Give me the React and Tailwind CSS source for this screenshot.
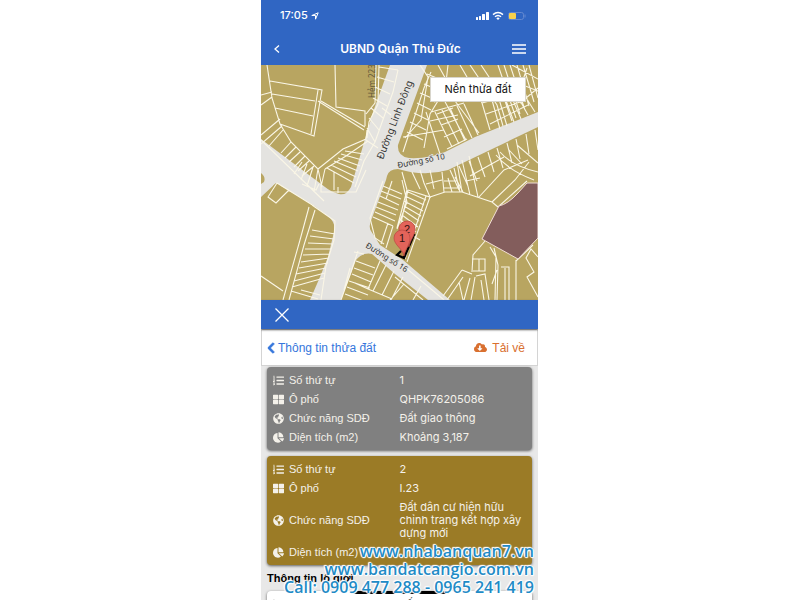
import {
  FaChartPie,
  FaChevronLeft,
  FaCloudDownloadAlt,
  FaGlobeAmericas,
  FaListOl,
  FaThLarge,
} from 'react-icons/fa';

const parcels = [
  {
    id: 1,
    color: 'bg-[#808080]',
    block: 'QHPK76205086',
    usage: 'Đất giao thông',
    area: 'Khoảng 3,187',
  },
  {
    id: 2,
    color: 'bg-[#9b7b26]',
    block: 'I.23',
    usage: 'Đất dân cư hiện hữu chỉnh trang kết hợp xây dựng mới',
    area: '',
  },
];

// Evenly spaced lot boundaries between the edges a-b and c-d
function rungs([ax, ay], [bx, by], [cx, cy], [dx, dy], n) {
  let d = '';
  for (let i = 0; i <= n; i++) {
    const t = i / n;
    d += `M${Math.round(ax + (bx - ax) * t)} ${Math.round(ay + (by - ay) * t)}`;
    d += `L${Math.round(cx + (dx - cx) * t)} ${Math.round(cy + (dy - cy) * t)}`;
  }
  return d;
}

const roads = [
  'M390 65L373 112L365 139L351 187Q346 196 339 194Q331 192 325 187L261 139V173Q266 177 264 182L261 184V197L276 183L313 205L329 217Q336 223 334 232L328 257L320 277L310 300H341L356 260Q363 252 372 254L395 274L428 300H450L403 260L380 245L371 231Q368 226 372 218L386 180L387 176Q389 169 398 169Q424 177 448 170L538 127V112L475 137L445 152Q428 159 409 158Q397 156 398 145L427 65Z',
];

const boundaries = [
  'M267 65L272 98L280 124L291 142L318 169L322 187',
  'M270 81L322 90L314 136L280 124M272 94L315 101M275 108L313 116M318 90L311 134',
  'M318 101L364 130M321 101L365 127',
  'M335 65L336 107L365 111V126M376 65L375 103L366 114M379 65L378 104L369 122L367 138',
  'M367 130L366 139L343 149L318 169M325 169L346 156L368 141M325 169L321 187M334 172V190',
  'M261 95L272 92M261 105L272 97M261 135L280 119M261 144L282 126M269 146L283 130M261 140L324 201',
  rungs([291, 142], [314, 166], [281, 153], [302, 176], 5),
  rungs([302, 162], [318, 169], [294, 174], [314, 192], 3),
  rungs([345, 151], [327, 168], [364, 154], [354, 183], 5),
  rungs([379, 67], [367, 128], [398, 70], [375, 142], 6),
  'M398 70L393 92L385 114L375 142L364 161L355 187M382 108L391 115M366 140L378 148',
  'M277 183L268 197L276 203L289 190M277 183L314 206M309 207L300 240L283 300M315 210L304 245L289 300M312 205L335 221L334 240L326 266L321 300',
  'M261 276L283 291M302 184L316 190L319 184M321 182V192H356L366 170M338 187V193',
  rungs([312, 230], [292, 287], [335, 234], [324, 278], 9),
  'M291 291L318 299M301 290L320 295',
  'M358 251L351 272L341 300M350 268L344 290M354 252L364 254M383 181L370 218L375 238L384 244',
  rungs([356, 261], [345, 294], [375, 268], [366, 302], 5),
  'M380 261L368 289L392 299M386 265L373 291M394 271L382 295M403 277L391 300M368 289L355 283',
  rungs([383, 186], [373, 217], [402, 194], [393, 226], 6),
  'M402 180L407 202L397 229M392 181L386 199M388 223L381 244M393 226L386 248M407 190L397 228',
  'M430 197L407 262M426 196L405 259M408 190L430 197L424 183L420 170M408 190L400 228L420 240',
  rungs([406, 191], [401, 220], [426, 200], [416, 232], 6),
  'M430 197L445 192L462 192L477 197L492 202L498 207M444 192L442 172M452 192L448 178M460 192L454 168',
  'M462 192L457 162M470 195L462 160M478 197L469 156M470 176L504 157M492 202L515 180L529 162M498 207L527 181M479 197L504 170L528 160',
  'M444 181H457M444 188H460M402 172L407 190M412 172L420 189M430 170L434 189M426 184L442 180M455 177L463 192M466 181L480 178',
  rungs([450, 170], [535, 130], [459, 190], [538, 150], 9),
  'M496 155Q508 170 534 180M500 152Q512 166 538 172M509 150L522 164M517 145L538 163',
  'M403 152L424 88L431 72M420 65L428 77L421 120L405 138M403 137L444 130M424 148L430 114L441 96M440 154L426 112',
  rungs([427, 74], [407, 132], [439, 79], [423, 140], 6),
  rungs([431, 90], [447, 149], [444, 88], [467, 139], 5),
  rungs([435, 112], [464, 104], [452, 147], [478, 135], 4),
  'M448 65L444 100L466 140M455 101L479 133M460 65L482 103L490 130M470 65L497 105L503 126M481 65L505 101L512 121M438 65L458 101',
  'M431 112L464 103M430 121L458 115M448 100L488 96M482 103L512 95M486 114L520 102M490 124L528 105',
  rungs([492, 100], [525, 96], [500, 129], [535, 112], 5),
  rungs([498, 65], [529, 65], [516, 118], [538, 98], 5),
  'M512 65L538 79M505 78L538 91M527 68L518 95M538 88L520 103',
  'M485 241L473 255L472 272M472 259H485V271H473M479 259V271M462 270L443 296M462 270L472 274M463 277L447 300M459 282L463 300M470 278L464 300M475 277L471 300M476 276L485 274L489 300M481 280L484 300M490 247L496 257L495 300M494 248L498 265L497 300M501 267H509V300M505 268V300M516 260V300M492 284L497 270',
  'M538 257L531 249L526 258L534 272L527 277L538 297M516 261L533 245',
  'M395 277L423 300M400 263L444 300M404 284L390 300M421 286L413 300',
];

function ParcelMap() {
  return (
    <svg
      viewBox="261 65 277 235"
      preserveAspectRatio="xMidYMid slice"
      className="block h-[235px] w-full"
      role="img"
      aria-label="Bản đồ thửa đất"
    >
      <rect x="0" y="0" width="800" height="400" fill="#b8a561" />
      {roads.map((d) => (
        <path key={d} d={d} fill="#e4e3e0" />
      ))}
      <ellipse cx="277" cy="187" rx="4" ry="3" fill="#b8a561" />
      <path d={boundaries.join('')} fill="none" stroke="#faf6e6" strokeWidth="1.1" />
      <path
        d="M527 183L518 193Q508 204 499 206L482 239L518 259L538 238V183Z"
        fill="#835d5c"
        stroke="#f0dcd4"
        strokeWidth="1"
      />
      <g fill="#333" stroke="#e4e3e0" strokeWidth="1.5" paintOrder="stroke" className="font-['Noto_Sans',sans-serif]">
        <text fontSize="10" transform="translate(383 160) rotate(-69)">Đường Linh Đông</text>
        <text fontSize="8" transform="translate(398 168) rotate(-11)">Đường số 10</text>
        <text fontSize="8" transform="translate(365 247) rotate(32)">Đường số 16</text>
      </g>
      <text fontSize="8" fill="#65593a" transform="translate(375 98) rotate(-90)" className="font-['Noto_Sans',sans-serif]">
        Hẻm 223
      </text>
      <path d="M401 251L397 255L404 258L414 235L411 234" fill="#b88a4b" stroke="#000" strokeWidth="2.2" />
      <Pin x={407} y={229} label="2" />
      <Pin x={402} y={238} label="1" />
    </svg>
  );
}

function Pin({ x, y, label }) {
  return (
    <g transform={`translate(${x} ${y})`}>
      <path d="M2 18C1 11-8 7-8 0A8 8 0 0 1 8 0C8 7 3 11 2 18Z" fill="#e3645a" stroke="#b94740" strokeWidth="0.7" />
      <text y="4" fontSize="11" textAnchor="middle" fill="#321412" className="font-['Liberation_Sans',sans-serif]">
        {label}
      </text>
    </g>
  );
}

function StatusIcons() {
  return (
    <svg viewBox="0 0 50 10" className="h-[10px] w-[50px]" fill="#fff" aria-hidden="true">
      <rect x="0" y="6" width="2" height="3" rx="0.5" />
      <rect x="3" y="5" width="2" height="4" rx="0.5" />
      <rect x="6" y="3" width="3" height="6" rx="0.5" />
      <rect x="10" y="1" width="3" height="8" rx="0.5" />
      <g fill="none" stroke="#fff" strokeWidth="1.5">
        <path d="M17 3.6Q22 -0.6 27 3.6" />
        <path d="M19 5.8Q22 3.2 25 5.8" />
      </g>
      <path d="M20.3 7.2Q22 6 23.7 7.2L22 9Z" />
      <rect x="32.5" y="1.5" width="15" height="7" rx="2" fill="none" stroke="#6288d0" />
      <path d="M49 3.5V6.5" stroke="#6288d0" />
      <rect x="33" y="2" width="7" height="6" rx="1" fill="#f7d14c" />
    </svg>
  );
}

function Row({ icon: Icon, label, value }) {
  return (
    <div className="flex items-center py-[3px] leading-[13px]">
      <dt className="flex w-1/2 shrink-0 items-center gap-[5px] whitespace-nowrap font-['Liberation_Sans',sans-serif]">
        <Icon className="size-[11px] shrink-0" />
        {label}
      </dt>
      <dd className="min-h-[13px]">{value}</dd>
    </div>
  );
}

function ParcelCard({ parcel }) {
  return (
    <dl className={`rounded-sm px-[6px] pt-1 pb-[3px] text-[11px] text-[#f4f1ea] shadow-[0_1px_3px_rgba(0,0,0,0.6)] ${parcel.color}`}>
      <Row icon={FaListOl} label="Số thứ tự" value={parcel.id} />
      <Row icon={FaThLarge} label="Ô phố" value={parcel.block} />
      <Row icon={FaGlobeAmericas} label="Chức năng SDĐ" value={parcel.usage} />
      <Row icon={FaChartPie} label="Diện tích (m2)" value={parcel.area} />
    </dl>
  );
}

export default function App() {
  return (
    <div className="flex h-screen justify-center overflow-hidden bg-white pr-px font-['Inter',sans-serif]">
      <main className="relative w-full max-w-[277px] overflow-hidden bg-[#e8e8e8]">
        <header className="bg-[#3066c3] text-white">
          <div className="flex h-[31px] items-center justify-between pr-3 pl-[19px]">
            <div className="flex items-center gap-[3px] text-[11px] font-medium">
              17:05
              <svg viewBox="0 0 8 8" className="size-2" fill="none" stroke="#fff" aria-hidden="true">
                <path d="M0.8 3.5L7.2 0.8L4.5 7.2V3.5Z" />
              </svg>
            </div>
            <StatusIcons />
          </div>
          <div className="flex h-[34px] items-center justify-between px-3 pt-px">
            <button type="button" aria-label="Quay lại" className="w-4">
              <svg viewBox="0 0 8 10" className="h-[10px] w-2" fill="none" stroke="#fff" strokeWidth="1.3">
                <path d="M6 1.5L2 5L6 8.5" />
              </svg>
            </button>
            <h1 className="text-[12px] font-semibold">UBND Quận Thủ Đức</h1>
            <button type="button" aria-label="Menu">
              <svg viewBox="0 0 14 10" className="h-[10px] w-[14px]" stroke="#fff" strokeWidth="1.3">
                <path d="M0 1H14M0 5H14M0 9H14" />
              </svg>
            </button>
          </div>
        </header>

        <section className="relative">
          <ParcelMap />
          <button type="button" className="absolute top-3 right-3 h-[25px] w-[96px] border border-[#d8d5cb] bg-white text-[11px] text-[#111]">
            Nền thửa đất
          </button>
        </section>

        <div className="relative flex h-[29px] items-center bg-[#3066c3] px-[14px] shadow-[0_1px_2px_rgba(0,0,0,0.6)]">
          <button type="button" aria-label="Đóng">
            <svg viewBox="0 0 14 14" className="block size-[14px]" stroke="#fff" strokeWidth="1.3">
              <path d="M0.5 0.5L13.5 13.5M13.5 0.5L0.5 13.5" />
            </svg>
          </button>
        </div>

        <nav className="flex h-[37px] items-center justify-between border border-[#d4d4d4] bg-white pr-3 pl-[5px] font-['Liberation_Sans',sans-serif] text-[12px]">
          <a href="#parcel" className="flex items-center gap-[3px] text-[#3576dc]">
            <FaChevronLeft className="h-3 w-2" stroke="currentColor" strokeWidth="40" />
            Thông tin thửa đất
          </a>
          <a href="#download" className="flex items-center gap-[5px] text-[#d97030]">
            <FaCloudDownloadAlt className="size-[13px]" />
            Tải về
          </a>
        </nav>

        <section className="flex flex-col gap-[6px] px-[6px] pt-px">
          {parcels.map((parcel) => (
            <ParcelCard key={parcel.id} parcel={parcel} />
          ))}
        </section>

        <section className="px-[6px] pt-[6px]">
          <h2 className="font-['Liberation_Sans',sans-serif] text-[11px] leading-[14px] font-bold text-black">Thông tin lộ giới</h2>
          <dl className="mt-[6px] rounded-sm bg-white px-[6px] pt-1 text-[11px] text-[#555] shadow-[0_1px_3px_rgba(0,0,0,0.6)]">
            <Row icon={FaListOl} label="Tên đường" value="Số 16" />
          </dl>
        </section>

        {/* home indicator */}
        <div className="absolute bottom-[6px] left-1/2 h-[3px] w-[98px] -translate-x-1/2 rounded-full bg-black" />

        <p className="absolute top-[542px] right-1 text-right font-['Open_Sans',sans-serif] text-[16px] leading-[18px] font-semibold whitespace-nowrap text-[#1f8bc6] [text-shadow:1px_0_1px_#fff,-1px_0_1px_#fff,0_1px_1px_#fff,0_-1px_1px_#fff,1px_1px_1px_#fff,-1px_-1px_1px_#fff]">
          www.nhabanquan7.vn
          <br />
          www.bandatcangio.com.vn
          <br />
          Call: 0909 477 288 - 0965 241 419
        </p>
      </main>
    </div>
  );
}
